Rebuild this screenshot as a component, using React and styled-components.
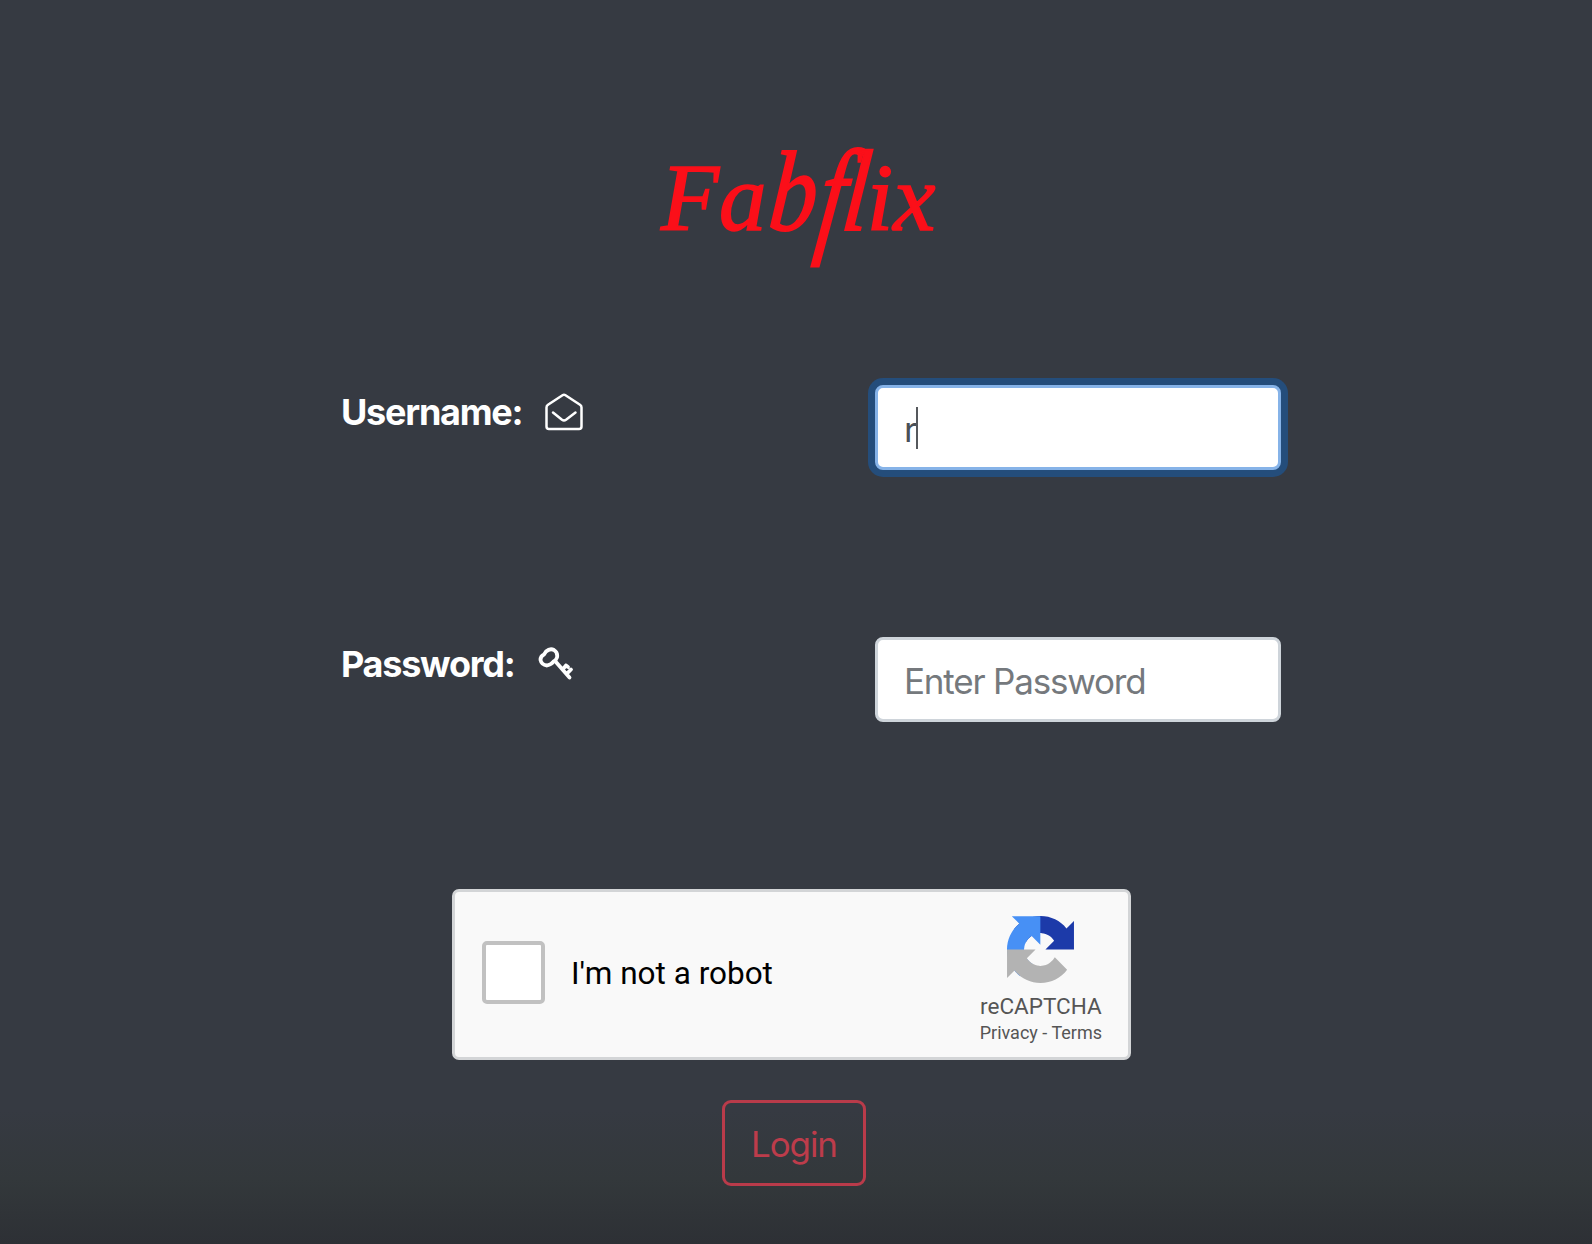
import React from "react";
import styled, { createGlobalStyle } from "styled-components";

const GlobalStyle = createGlobalStyle`
  *, *::before, *::after { box-sizing: border-box; }
  body { margin: 0; background: #363a42; overflow: hidden; }
`;

const Page = styled.main`
  height: 1244px;
  padding-top: 128px;
  display: flex;
  flex-direction: column;
  background: linear-gradient(to bottom, #363a42 0, #363a42 1110px, #33383b 1180px, #2d3035 1244px);
  font-family: Inter, "Liberation Sans", sans-serif;
  color: #fff;
`;

const Brand = styled.h1`
  margin: 0 0 0 661px;
  height: 256.5px;
  font: italic 400 95px/140px "Liberation Serif", serif;
  color: #fb0f19;
  -webkit-text-stroke: 1.6px #fb0f19;
  white-space: nowrap;
`;

const Letter = styled.span`
  display: inline-block;
  transform-origin: 50% 102px;
  transform: translateY(${(p) => p.$drop || 0}px) skewX(${(p) => p.$lean}deg) scaleY(${(p) => p.$stretch});
`;

const Form = styled.form`
  display: flex;
  flex-direction: column;
`;

const Field = styled.div`
  display: grid;
  grid-template-columns: 534px 406px;
  height: 252px;
  padding-left: 341px;
  align-items: start;
`;

const Label = styled.label`
  display: flex;
  align-items: center;
  gap: 23px;
  height: 55px;
  font-size: 36px;
  font-weight: 700;
  letter-spacing: -1.25px;
`;

const Icon = styled.svg`
  display: block;
  fill: none;
  stroke: #fff;
  stroke-linecap: round;
  stroke-linejoin: round;
`;

const inputBox = `
  width: 100%;
  height: 85px;
  padding: 4px 26px 0;
  border-radius: 8px;
  background: #fff;
  font-family: Inter, "Liberation Sans", sans-serif;
  font-size: 35px;
  letter-spacing: -1.2px;
`;

const FocusedInput = styled.div`
  ${inputBox}
  display: flex;
  align-items: center;
  border: 3px solid #86b3e8;
  box-shadow: 0 0 0 7px #244d7b;
  color: #495057;
`;

const Caret = styled.span`
  width: 2px;
  height: 42px;
  margin-top: -2px;
  background: #55585c;
`;

const Input = styled.input`
  ${inputBox}
  border: 3px solid #ced4da;
  outline: none;
  &::placeholder { color: #75797d; opacity: 1; }
`;

const Captcha = styled.section`
  width: 679px;
  height: 171px;
  margin-left: 452px;
  padding: 0 26px 0 27px;
  display: flex;
  align-items: center;
  background: #f9f9f9;
  border: 3px solid #d3d5d7;
  border-radius: 7px;
  font-family: Roboto, sans-serif;
  color: #000;
`;

const Checkbox = styled.span`
  width: 63px;
  height: 63px;
  margin-top: -4px;
  background: #fff;
  border: 4px solid #c1c1c1;
  border-radius: 5px;
`;

const Prompt = styled.span`
  flex: 1;
  margin: -2px 0 0 26px;
  font-size: 31.5px;
`;

const CaptchaBrand = styled.div`
  display: flex;
  flex-direction: column;
  align-items: center;
  padding-top: 13px;
  color: #555;
`;

const CaptchaName = styled.span`
  margin-top: 8px;
  font-size: 22.5px;
  line-height: 30px;
`;

const CaptchaLinks = styled.span`
  font-size: 18px;
  line-height: 24px;
`;

const LoginButton = styled.button`
  width: 144px;
  height: 86px;
  margin: 40px 0 0 722px;
  padding: 3px 0 0;
  background: transparent;
  border: 3px solid #b93b4a;
  border-radius: 9px;
  color: #bd3c4b;
  font-family: Inter, "Liberation Sans", sans-serif;
  font-size: 35px;
  letter-spacing: -1.1px;
`;

function EnvelopeIcon() {
  return (
    <Icon width="38" height="38" viewBox="0 0 38 38" strokeWidth="2.5">
      <path d="M1.5 14.5Q1.5 12.8 3 11.8L17.5 2.2Q19 1.2 20.5 2.2L35 11.8Q36.5 12.8 36.5 14.5V33.5Q36.5 36 34 36H4Q1.5 36 1.5 33.5Z" />
      <path d="M8 19.5L17 26.8Q19 28.2 21 26.8L30.5 19.5" />
    </Icon>
  );
}

function KeyIcon() {
  return (
    <Icon width="36" height="34" viewBox="0 0 36 34" strokeWidth="3.8">
      <path d="M8 4.5Q12 1 16 3Q20 5.5 19 10.5Q18 13.5 15.5 14.5Q13.5 17.5 9 18.5Q3.5 18 2.5 13Q2.5 9 6 7.5Z" />
      <path d="M17.5 14.5L31.5 30.5M25 22L28 18.5M29.5 26L33 22.5M28 18.5L30 20" />
    </Icon>
  );
}

function CaptchaLogo() {
  return (
    <svg width="67" height="67" viewBox="0 0 64 64">
      <path fill="#1c3aa9" d="M64 31.955l-.033-1.37V4.687l-7.16 7.16C50.948 4.674 42.033.093 32.05.093c-10.4 0-19.622 4.96-25.458 12.64l11.736 11.86a15.55 15.55 0 0 1 4.754-5.334c2.05-1.6 4.952-2.906 8.968-2.906.485 0 .86.057 1.135.163 4.976.393 9.288 3.14 11.828 7.124l-8.307 8.307L64 31.953" />
      <path fill="#4790f5" d="M31.862.094l-1.37.033H4.594l7.16 7.16C4.58 13.147 0 22.06 0 32.046c0 10.4 4.96 19.622 12.64 25.458L24.5 45.768a15.55 15.55 0 0 1-5.334-4.754c-1.6-2.05-2.906-4.952-2.906-8.968 0-.485.057-.86.163-1.135.393-4.976 3.14-9.288 7.124-11.828l8.307 8.307L31.86.095" />
      <path fill="#b3b3b3" d="M.001 32.045l.033 1.37v25.898l7.16-7.16c5.86 7.173 14.774 11.754 24.76 11.754 10.4 0 19.622-4.96 25.458-12.64l-11.736-11.86a15.55 15.55 0 0 1-4.754 5.334c-2.05 1.6-4.952 2.906-8.968 2.906-.485 0-.86-.057-1.135-.163-4.976-.393-9.288-3.14-11.828-7.124l8.307-8.307c-10.522.04-22.4.066-27.295-.005" />
    </svg>
  );
}

export default function App() {
  return (
    <>
      <GlobalStyle />
      <Page>
        <Brand>
          Fa<Letter $stretch={1.2} $lean={-5}>b</Letter>
          <Letter $stretch={1.36} $drop={9} $lean={-8}>f</Letter>
          <Letter $stretch={1.22} $lean={-6}>l</Letter>ix
        </Brand>
        <Form>
          <Field>
            <Label>Username: <EnvelopeIcon /></Label>
            <FocusedInput>r<Caret /></FocusedInput>
          </Field>
          <Field>
            <Label>Password: <KeyIcon /></Label>
            <Input type="password" placeholder="Enter Password" />
          </Field>
          <Captcha>
            <Checkbox />
            <Prompt>I'm not a robot</Prompt>
            <CaptchaBrand>
              <CaptchaLogo />
              <CaptchaName>reCAPTCHA</CaptchaName>
              <CaptchaLinks>Privacy - Terms</CaptchaLinks>
            </CaptchaBrand>
          </Captcha>
          <LoginButton type="button">Login</LoginButton>
        </Form>
      </Page>
    </>
  );
}
